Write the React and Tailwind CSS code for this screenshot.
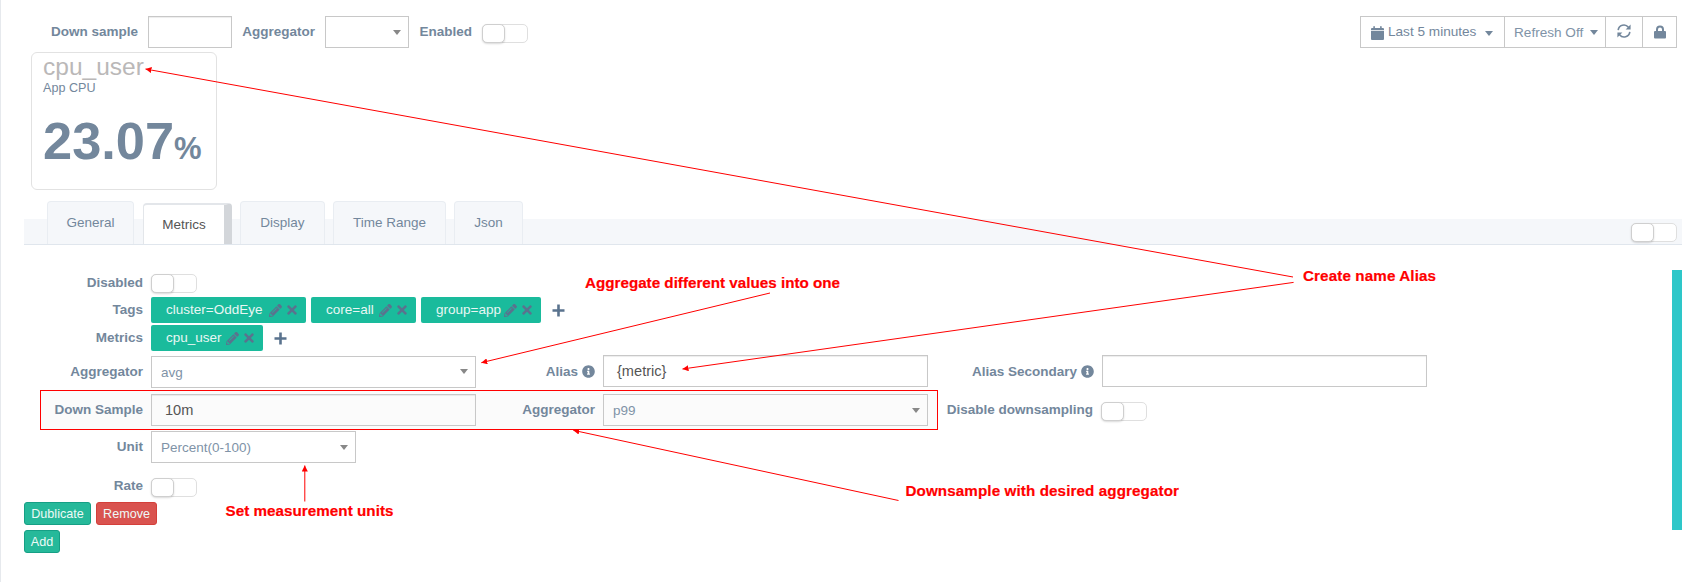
import React from "react";
import { FaPencilAlt, FaTimes, FaInfoCircle } from "react-icons/fa";

const Switch = ({ className = "" }) => (
  <span className={`flex h-[19px] w-[46px] shrink-0 rounded-[5px] border border-[#dfdfdf] bg-white ${className}`}>
    <span className="-ml-px -mt-px h-[19px] w-[23px] rounded-[5px] border border-[#cfcfcf] bg-white shadow-[0_1px_2px_rgba(0,0,0,0.15)]" />
  </span>
);

const Caret = ({ className = "text-[#888]" }) => (
  <svg className={`h-[5px] w-[8px] shrink-0 ${className}`} viewBox="0 0 8 5" fill="currentColor">
    <path d="M0 0H8L4 5Z" />
  </svg>
);

const Plus = () => (
  <svg className="ml-[11px] h-[13px] w-[13px] text-[#5a738e]" viewBox="0 0 13 13" stroke="currentColor" strokeWidth="2.6">
    <path d="M6.500 .5V12.500M.5 6.500H12.500" />
  </svg>
);

const Label = ({ children, className = "" }) => (
  <span className={`flex shrink-0 items-center justify-end gap-1 whitespace-nowrap font-bold ${className}`}>{children}</span>
);

const Select = ({ children, className = "" }) => (
  <span className={`flex h-8 shrink-0 items-center justify-between border border-[#c8c8c8] pl-[9px] pr-[7px] ${className}`}>
    <span className="mt-[2px] whitespace-nowrap text-[#8093a7]">{children}</span>
    <Caret />
  </span>
);

const Field = ({ children, className = "" }) => (
  <span className={`flex h-8 shrink-0 items-center border border-[#c8c8c8] pl-[13px] text-[14.6px] text-[#555] shadow-[inset_0_1px_1px_rgba(0,0,0,0.075)] ${className}`}>
    {children}
  </span>
);

const Tag = ({ children, className = "" }) => (
  <span className={`flex h-[26px] items-center rounded-[2px] bg-[#1abb9c] pl-[15px] pr-[9px] text-[#e9f7f4] ${className}`}>
    <span className="whitespace-nowrap">{children}</span>
    <FaPencilAlt className="ml-auto h-[13px] w-[13px] shrink-0 text-[#5a738e]" />
    <FaTimes className="ml-[5px] h-[14px] w-[10px] shrink-0 text-[#5a738e]" />
  </span>
);

const Tab = ({ children, className = "" }) => (
  <span className={`flex h-[43px] items-center justify-center rounded-t-[4px] border border-b-0 border-[#e9edf2] bg-[#f5f7fa] ${className}`}>
    {children}
  </span>
);

const Note = ({ x, y, width, children }) => (
  <text x={x} y={y} fill="#f00" stroke="#f00" strokeWidth="0.2" fontSize="15.2" fontWeight="700" textLength={width}>
    {children}
  </text>
);

const Arrow = ({ x1, y1, x2, y2 }) => (
  <line x1={x1} y1={y1} x2={x2} y2={y2} stroke="#f00" strokeWidth="1" markerEnd="url(#tip)" />
);

export default function App() {
  return (
    <div className="relative h-[582px] w-[1700px] overflow-hidden border-l border-[#e6e9ed] bg-white font-['Liberation_Sans',Arial,sans-serif] text-[13.5px] leading-5 text-[#73879c]">
      <header className="flex items-start justify-between pl-[49px] pr-[23px] pt-4">
        <div className="flex h-8 items-center">
          <Label className="w-[88px]">Down sample</Label>
          <Field className="ml-[10px] w-[84px]" />
          <Label className="w-[83px]">Aggregator</Label>
          <Select className="ml-[10px] w-[84px]" />
          <Label className="w-[63px]">Enabled</Label>
          <Switch className="ml-[10px] mt-[2px]" />
        </div>
        <div className="flex h-8 border border-[#c8c8c8]">
          <span className="flex w-[144px] items-center border-r border-[#c8c8c8] pl-[10px]">
            <svg className="mt-px h-[14px] w-[13px]" viewBox="0 0 13 14" fill="currentColor">
              <path d="M0 4.2V3Q0 2 1 2H2.300V.8Q2.300 0 3.100 0T3.900.8V2H9.100V.8Q9.100 0 9.900 0T10.700.8V2H12Q13 2 13 3V4.200ZM0 5.100H13V13Q13 14 12 14H1Q0 14 0 13Z" />
            </svg>
            <span className="ml-1 w-[89px] whitespace-nowrap text-[13.6px]">Last 5 minutes</span>
            <Caret className="ml-2 mt-[3px] text-[#73879c]" />
          </span>
          <span className="flex w-[101px] items-center border-r border-[#c8c8c8] pl-[9px]">
            <span className="mt-[2px] w-[69px] whitespace-nowrap text-[13.6px] text-[#8093a7]">Refresh Off</span>
            <Caret className="ml-[7px]" />
          </span>
          <span className="flex w-[37px] justify-center border-r border-[#c8c8c8] pt-[7px]">
            <svg className="h-[14px] w-[14px]" viewBox="0 0 14 14" fill="none" stroke="currentColor" strokeWidth="1.600">
              <path d="M1.200 6.200A5.700 5.700 0 0 1 11.400 3.300M12.800 7.800A5.700 5.700 0 0 1 2.600 10.700" />
              <path d="M13.600 .6V5.600H8.600ZM.4 13.400V8.400H5.400Z" fill="currentColor" stroke="none" />
            </svg>
          </span>
          <span className="flex w-[33px] justify-center pt-[8px]">
            <svg className="h-[14px] w-[12px]" viewBox="0 0 12 14">
              <path d="M3 7V4.500A3 3 0 0 1 9 4.500V7" fill="none" stroke="currentColor" strokeWidth="2" />
              <rect y="6" width="12" height="7.500" rx="1" fill="currentColor" />
            </svg>
          </span>
        </div>
      </header>

      <section className="ml-[30px] mt-1 flex h-[138px] w-[186px] flex-col rounded-[6px] border border-[#e2e2e2] pl-[11px]">
        <span className="mt-px h-[26px] text-[24.5px] leading-[26px] text-[#bab8b8]">cpu_user</span>
        <span className="h-4 text-[12.6px] leading-4">App CPU</span>
        <span className="mt-[15px] flex items-baseline font-bold leading-[60px]">
          <span className="text-[52.4px]">23.07</span>
          <span className="text-[31px]">%</span>
        </span>
      </section>

      <nav className="ml-[23px] mt-[11px] flex h-11 w-[1658px] items-end justify-between border-b border-[#e0e6ed] bg-[linear-gradient(#fff_18px,#f5f7fa_18px)] pl-[23px] pr-[5px]">
        <div className="flex items-end">
          <Tab className="w-[87px]">General</Tab>
          <span className="ml-[9px] flex h-[41px] w-[89px] items-center justify-center rounded-t-[4px] border border-b-0 border-r-8 border-t-2 border-[#e3e6ea] border-r-[#d3d6da] bg-white text-[#555]">
            Metrics
          </span>
          <Tab className="ml-2 w-[85px]">Display</Tab>
          <Tab className="ml-2 w-[113px]">Time Range</Tab>
          <Tab className="ml-2 w-[69px]">Json</Tab>
        </div>
        <Switch className="mb-[2px]" />
      </nav>

      <main className="flex pl-[23px]">
        <div className="flex w-[1648px] flex-col pt-[26px]">
          <div className="mb-[2px] flex h-6 items-center">
            <Label className="w-[119px]">Disabled</Label>
            <Switch className="ml-2 mt-px" />
          </div>
          <div className="flex h-[26px] items-center">
            <Label className="w-[119px]">Tags</Label>
            <div className="ml-2 flex gap-[5px]">
              <Tag className="w-[155px]">cluster=OddEye</Tag>
              <Tag className="w-[105px]">core=all</Tag>
              <Tag className="w-[120px]">group=app</Tag>
            </div>
            <Plus />
          </div>
          <div className="mt-[2px] flex h-[26px] items-center">
            <Label className="w-[119px]">Metrics</Label>
            <div className="ml-2 flex"><Tag className="w-[112px]">cpu_user</Tag></div>
            <Plus />
          </div>
          <div className="mt-1 flex h-[33px] items-center">
            <Label className="w-[119px]">Aggregator</Label>
            <Select className="ml-2 w-[325px]">avg</Select>
            <Label className="w-[119px]">Alias <FaInfoCircle className="h-[13px] w-[13px]" /></Label>
            <Field className="-mt-px ml-2 w-[325px]">{"{metric}"}</Field>
            <Label className="w-[166px]">Alias Secondary <FaInfoCircle className="h-[13px] w-[13px]" /></Label>
            <Field className="-mt-px ml-2 w-[325px]" />
          </div>
          <div className="mt-[2px] flex h-10 items-center">
            <div className="ml-4 flex h-10 w-[898px] items-center border border-[#f00] bg-[#fbfbfb]">
              <Label className="w-[102px]">Down Sample</Label>
              <Field className="ml-2 w-[325px]">10m</Field>
              <Label className="w-[119px]">Aggregator</Label>
              <Select className="ml-2 w-[325px]">p99</Select>
            </div>
            <Label className="w-[155px]">Disable downsampling</Label>
            <Switch className="ml-2 mt-[3px]" />
          </div>
          <div className="mt-px flex h-8 items-center">
            <Label className="w-[119px]">Unit</Label>
            <Select className="ml-2 w-[205px]">Percent(0-100)</Select>
          </div>
          <div className="mt-[12px] flex h-[22px] items-center">
            <Label className="w-[119px]">Rate</Label>
            <Switch className="ml-2 mt-[2px]" />
          </div>
          <div className="mt-[5px] flex gap-[5px] text-[12.6px] leading-[20px] text-[#eefaf7]">
            <span className="flex h-[23px] w-[67px] items-center justify-center rounded-[3px] border border-[#169f85] bg-[#26b99a]">Dublicate</span>
            <span className="flex h-[23px] w-[61px] items-center justify-center rounded-[3px] border border-[#d43f3a] bg-[#d9534f]">Remove</span>
          </div>
          <div className="mt-[5px] flex text-[12.6px] text-[#eefaf7]">
            <span className="flex h-[23px] w-9 items-center justify-center rounded-[3px] border border-[#169f85] bg-[#26b99a]">Add</span>
          </div>
        </div>
        <div className="mt-[25px] h-[260px] w-[10px] bg-[#2ec7c9]" />
      </main>

      <svg className="pointer-events-none absolute -left-px top-0 h-[582px] w-[1700px]" viewBox="0 0 1700 582">
        <defs>
          <marker id="tip" markerUnits="userSpaceOnUse" markerWidth="7" markerHeight="6" refX="6" refY="3" orient="auto">
            <path d="M0 0L6 3L0 6Z" fill="#f00" />
          </marker>
        </defs>
        <Arrow x1={1293} y1={277} x2={145.5} y2={69} />
        <Arrow x1={1293.6} y1={282.4} x2={682.5} y2={369} />
        <Arrow x1={770} y1={293} x2={481.3} y2={362.7} />
        <Arrow x1={898.5} y1={500.5} x2={573.3} y2={430.3} />
        <Arrow x1={304.8} y1={501.5} x2={304.8} y2={465.5} />
        <Note x={585} y={287.5} width={255}>Aggregate different values into one</Note>
        <Note x={1303} y={281} width={133}>Create name Alias</Note>
        <Note x={905.5} y={496} width={273.5}>Downsample with desired aggregator</Note>
        <Note x={225.5} y={515.7} width={168}>Set measurement units</Note>
      </svg>
    </div>
  );
}
